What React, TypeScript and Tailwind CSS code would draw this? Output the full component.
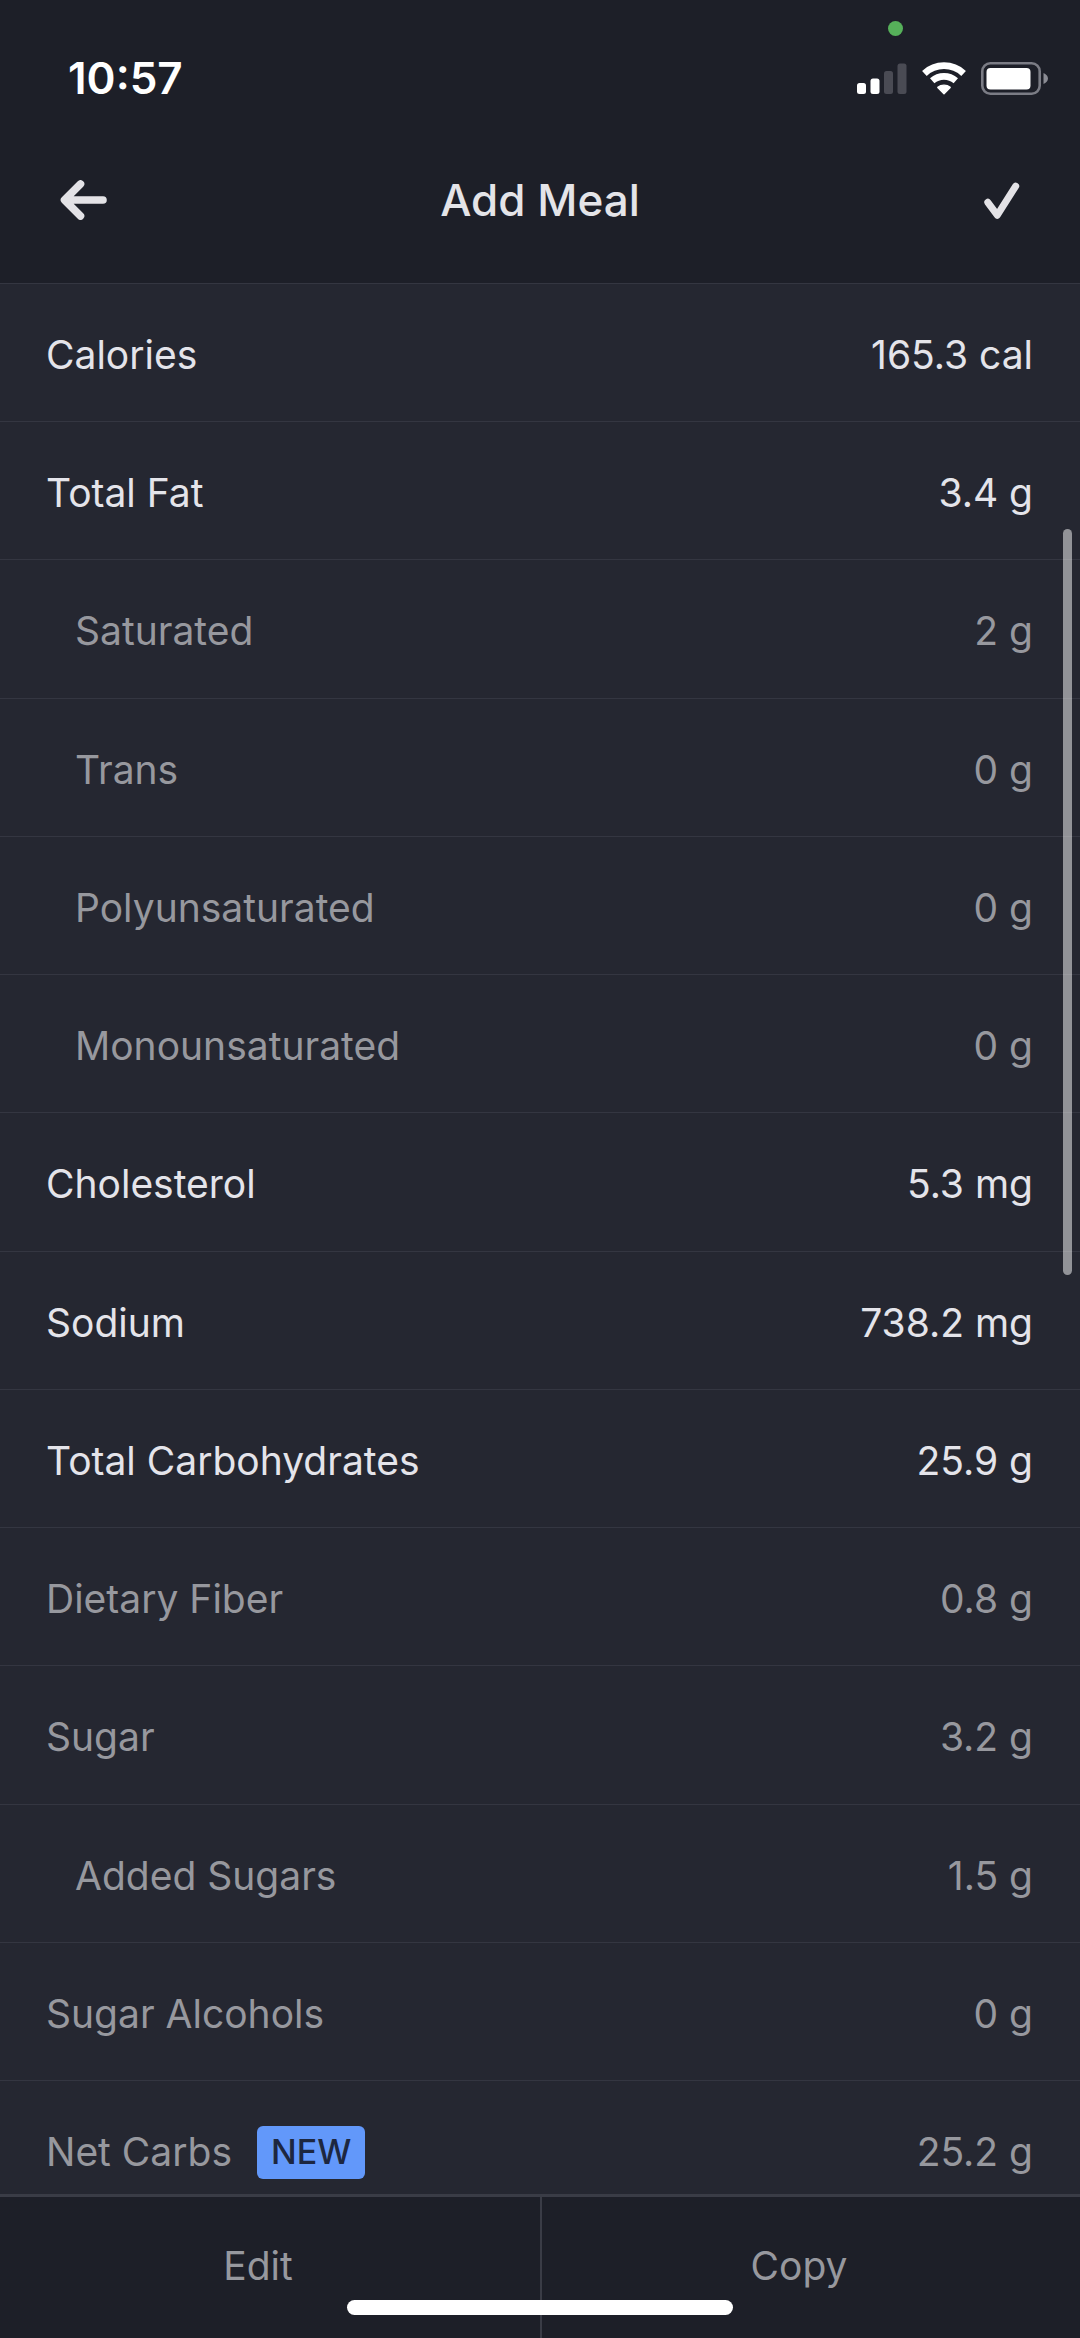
type Nutrient = {
  label: string;
  value: string;
  tone: "main" | "muted";
  nested?: boolean;
  isNew?: boolean;
};

const nutrients: Nutrient[] = [
  { label: "Calories", value: "165.3 cal", tone: "main" },
  { label: "Total Fat", value: "3.4 g", tone: "main" },
  { label: "Saturated", value: "2 g", tone: "muted", nested: true },
  { label: "Trans", value: "0 g", tone: "muted", nested: true },
  { label: "Polyunsaturated", value: "0 g", tone: "muted", nested: true },
  { label: "Monounsaturated", value: "0 g", tone: "muted", nested: true },
  { label: "Cholesterol", value: "5.3 mg", tone: "main" },
  { label: "Sodium", value: "738.2 mg", tone: "main" },
  { label: "Total Carbohydrates", value: "25.9 g", tone: "main" },
  { label: "Dietary Fiber", value: "0.8 g", tone: "muted" },
  { label: "Sugar", value: "3.2 g", tone: "muted" },
  { label: "Added Sugars", value: "1.5 g", tone: "muted", nested: true },
  { label: "Sugar Alcohols", value: "0 g", tone: "muted" },
  { label: "Net Carbs", value: "25.2 g", tone: "muted", isNew: true },
];

function SignalIcon() {
  return (
    <svg width="50" height="33" viewBox="0 0 50 33" aria-hidden="true">
      <rect x="0" y="21" width="9" height="11" rx="2.5" fill="#fff" />
      <rect x="13.5" y="16.5" width="9" height="15.5" rx="2.5" fill="#fff" />
      <rect x="27" y="9" width="9" height="23" rx="2.5" fill="#4a4b54" />
      <rect x="40.5" y="1.5" width="9" height="30.5" rx="2.5" fill="#4a4b54" />
    </svg>
  );
}

function WifiIcon() {
  return (
    <svg width="44" height="33" viewBox="0 0 44 33" aria-hidden="true">
      <path d="M2.4 11.4A28.8 28.8 0 0 1 41.6 11.4" fill="none" stroke="#fff" strokeWidth="6.8" />
      <path d="M10.2 18.8A17.8 17.8 0 0 1 33.8 18.8" fill="none" stroke="#fff" strokeWidth="6.6" />
      <path
        d="M22 31.8L15.8 25.4A9.6 9.6 0 0 1 28.2 25.4Z"
        fill="#fff"
        stroke="#fff"
        strokeWidth="1.4"
        strokeLinejoin="round"
      />
    </svg>
  );
}

function BatteryIcon() {
  return (
    <svg width="67" height="33" viewBox="0 0 67 33" aria-hidden="true">
      <rect x="1.3" y="1.3" width="57.4" height="30.4" rx="8" fill="none" stroke="#7b7c85" strokeWidth="2.6" />
      <rect x="5.5" y="6" width="44" height="21.5" rx="4" fill="#fff" />
      <path d="M62.5 11V22C65 21 67 19 67 16.5S65 12 62.5 11Z" fill="#8b8c94" />
    </svg>
  );
}

function StatusBar() {
  return (
    <div className="relative flex h-[116px] items-end justify-between pr-8 pb-[21px] pl-[68px]">
      <time className="text-[44px] leading-[33px] font-semibold text-white">10:57</time>
      <div className="flex items-center gap-[15px]">
        <SignalIcon />
        <WifiIcon />
        <BatteryIcon />
      </div>
      <span className="absolute top-[21px] right-[177px] size-[15px] rounded-full bg-[#56b05a]" />
    </div>
  );
}

function TitleBar() {
  return (
    <div className="grid grid-cols-[1fr_auto_1fr] items-center px-[60px] pt-[56px] pb-[55px]">
      <button type="button" aria-label="Back" className="justify-self-start">
        <svg width="47" height="40" viewBox="0 0 47 40" className="block" aria-hidden="true">
          <path
            d="M20.5 4L4.5 20L20.5 36M5 20H43"
            fill="none"
            stroke="#e3e2e6"
            strokeWidth="7.6"
            strokeLinecap="round"
            strokeLinejoin="round"
          />
        </svg>
      </button>
      <h1 className="text-[44px] leading-[56px] font-medium">Add Meal</h1>
      <button type="button" aria-label="Save meal" className="justify-self-end">
        <svg width="36" height="38" viewBox="0 0 36 38" className="block" aria-hidden="true">
          <path
            d="M3.8 21.3L13.3 34.2L31.7 5.2"
            fill="none"
            stroke="#e3e2e6"
            strokeWidth="7"
            strokeLinecap="round"
            strokeLinejoin="round"
          />
        </svg>
      </button>
    </div>
  );
}

function NutrientRow({ item }: { item: Nutrient }) {
  const tone = item.tone === "main" ? "text-[#e4e4ea]" : "text-[#97989e]";
  const indent = item.nested ? "pl-[75px]" : "pl-[46px]";
  return (
    <div
      className={`flex flex-1 items-start justify-between border-b border-[#343641] pt-[47px] pr-[47px] pb-[42px] text-[39px] leading-[48px] last:flex-none last:border-b-0 last:pb-[18px] ${tone} ${indent}`}
    >
      <dt className="flex items-center gap-[25px]">
        {item.label}
        {item.isNew && (
          <span className="-my-1 flex h-[53px] items-center rounded-md bg-[#6298fa] px-[14px] text-[34px] font-medium text-[#1d2740]">
            NEW
          </span>
        )}
      </dt>
      <dd>{item.value}</dd>
    </div>
  );
}

export default function App() {
  return (
    <div className="flex min-h-screen flex-col bg-[#1d1f28] font-['Inter',sans-serif] text-[#e4e4e8]">
      <header className="border-b border-[#343641]">
        <StatusBar />
        <TitleBar />
      </header>

      <main className="relative flex flex-1 flex-col bg-[#252731]">
        <dl className="flex flex-1 flex-col">
          {nutrients.map((item) => (
            <NutrientRow key={item.label} item={item} />
          ))}
        </dl>
        <div className="absolute top-[245px] right-2 h-[746px] w-[9px] rounded-full bg-white/50" />
      </main>

      <footer className="relative grid h-[144px] grid-cols-2 border-t-3 border-[#3a3c46] text-[39px] leading-[48px] text-[#97989e]">
        <button type="button" className="flex items-start justify-center pt-[45px] pr-6">
          Edit
        </button>
        <button
          type="button"
          className="flex items-start justify-center border-l-2 border-[#3a3c46] pt-[45px] pr-6"
        >
          Copy
        </button>
        <div className="absolute bottom-[23px] left-1/2 h-[15px] w-[386px] -translate-x-1/2 rounded-full bg-white" />
      </footer>
    </div>
  );
}
